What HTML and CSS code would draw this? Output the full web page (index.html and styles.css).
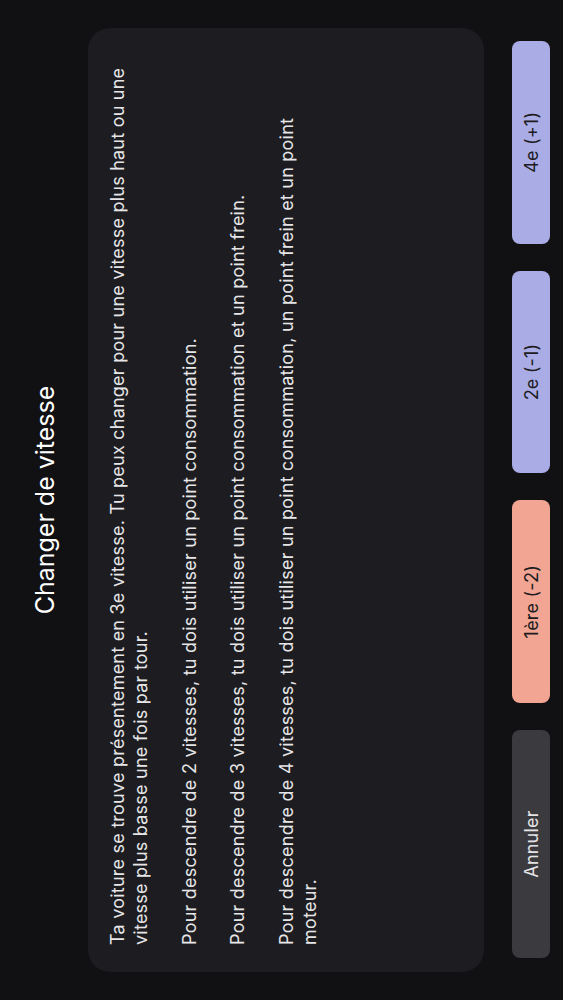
FILE: index.html
```html
<!DOCTYPE html>
<html lang="fr">
<head>
<meta charset="utf-8">
<title>Changer de vitesse</title>
<link rel="stylesheet" href="styles.css">
</head>
<body>
<div class="frame">
<div class="screen">
  <div class="title-bar"><h1 class="title">Changer de vitesse</h1></div>
  <div class="card">
    <p class="para">Ta voiture se trouve présentement en 3e vitesse. Tu peux changer pour une vitesse plus haut ou une vitesse plus basse une fois par tour.</p>
    <p class="para">Pour descendre de 2 vitesses, tu dois utiliser un point consommation.</p>
    <p class="para">Pour descendre de 3 vitesses, tu dois utiliser un point consommation et un point frein.</p>
    <p class="para">Pour descendre de 4 vitesses, tu dois utiliser un point consommation, un point frein et un point moteur.</p>
  </div>
  <div class="actions">
    <button class="btn btn-cancel">Annuler</button>
    <button class="btn btn-down">1ère (-2)</button>
    <button class="btn btn-gear">2e (-1)</button>
    <button class="btn btn-gear">4e (+1)</button>
  </div>
</div>
</div>
</body>
</html>
```

FILE: styles.css
```css
html, body {
  margin: 0;
  padding: 0;
  background: #111013;
}

.frame {
  width: 563px;
  height: 1000px;
  overflow: hidden;
  background: #111013;
}

.screen {
  width: 1000px;
  height: 563px;
  background: #111013;
  display: flex;
  flex-direction: column;
  transform-origin: 0 0;
  transform: translateY(1000px) rotate(-90deg);
  font-family: Inter, "Liberation Sans", Arial, sans-serif;
  box-sizing: border-box;
}

.title-bar {
  height: 88px;
  display: flex;
  align-items: center;
  justify-content: center;
  flex-shrink: 0;
}

.title {
  margin: 0;
  font-size: 25px;
  font-weight: 400;
  color: #ffffff;
  padding-top: 2px;
}

.card {
  margin: 0 28px;
  height: 396px;
  flex-shrink: 0;
  background: #1d1c20;
  border-radius: 22px;
  box-sizing: border-box;
  padding: 18px 27px;
}

.para {
  margin: 0 0 25.5px 0;
  font-size: 18px;
  line-height: 23px;
  letter-spacing: 0.23px;
  color: #e6e6e8;
}

.actions {
  margin-top: 28px;
  display: flex;
  gap: 27px;
  padding: 0 41px 0 42px;
}

.btn {
  height: 38px;
  border: none;
  border-radius: 8px;
  font-family: Inter, "Liberation Sans", Arial, sans-serif;
  font-size: 18px;
  letter-spacing: 0.2px;
  padding: 0;
  flex: 1;
  color: #1b1b20;
}

.btn-cancel {
  flex: 0 0 228px;
  background: #3b3a3e;
  color: #e4e4e6;
}

.btn-down {
  background: #f2a593;
}

.btn-gear {
  background: #aaace6;
}
```
